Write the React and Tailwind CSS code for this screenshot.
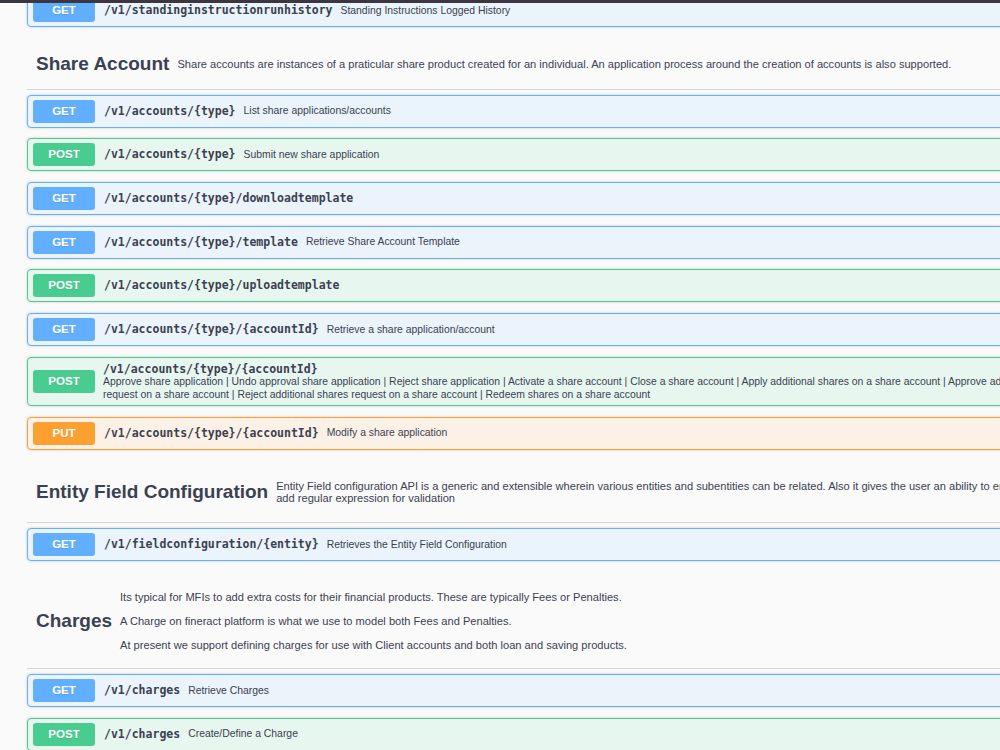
import React from "react";

const SANS = "font-['Liberation_Sans',Arial,sans-serif]";
const MONO = "font-['DejaVu_Sans_Mono',monospace]";

const STYLES = {
  GET: {
    box: "border-[#61affe] bg-[#ebf3fb]",
    badge: "bg-[#61affe]",
  },
  POST: {
    box: "border-[#49cc90] bg-[#e8f6f0]",
    badge: "bg-[#49cc90]",
  },
  PUT: {
    box: "border-[#fca130] bg-[#fbf1e7]",
    badge: "bg-[#fca130]",
  },
};

function Badge({ method }) {
  return (
    <div
      className={`${STYLES[method].badge} w-[62px] h-[23px] shrink-0 rounded-[3px] flex items-center justify-center text-white font-bold text-[11.5px] ${SANS} [text-shadow:0_1px_0_rgba(0,0,0,0.1)]`}
    >
      {method}
    </div>
  );
}

function Op({ method, path, desc, lines, className = "" }) {
  const s = STYLES[method];
  if (lines) {
    return (
      <div
        className={`${s.box} border rounded-[4px] shadow-[0_0_3px_rgba(0,0,0,0.19)] flex items-center px-[5px] py-[4px] mb-[10.67px] ${className}`}
      >
        <Badge method={method} />
        <div className="ml-[8px] flex flex-col">
          <span className={`${MONO} font-bold text-[11.5px] leading-[14.5px] text-[#3b4151] whitespace-nowrap`}>
            {path}
          </span>
          <div className={`${SANS} text-[10.4px] leading-[12.5px] text-[#3b4151] whitespace-nowrap`}>
            {lines.map((l, i) => (
              <div key={i}>{l}</div>
            ))}
          </div>
        </div>
      </div>
    );
  }
  return (
    <div
      className={`${s.box} border rounded-[4px] shadow-[0_0_3px_rgba(0,0,0,0.19)] flex items-center h-[33px] px-[5px] mb-[10.67px] ${className}`}
    >
      <Badge method={method} />
      <span className={`${MONO} ml-[9px] font-bold text-[11.5px] text-[#3b4151] whitespace-nowrap`}>
        {path}
      </span>
      {desc && (
        <span className={`${SANS} ml-[8px] text-[10.4px] text-[#3b4151] whitespace-nowrap`}>
          {desc}
        </span>
      )}
    </div>
  );
}

function TagHeader({ title, pad, children }) {
  return (
    <div className={`flex items-center border-b border-[rgba(59,65,81,0.2)] pl-[9px] pr-[16px] mb-[5px] ${pad}`}>
      <h4 className={`${SANS} font-bold text-[19px] leading-[24px] text-[#3b4151] whitespace-nowrap`}>
        {title}
      </h4>
      <div className={`${SANS} pl-[8px] text-[11.1px] leading-[12px] text-[#3b4151] flex flex-col gap-[12px] py-[11px] whitespace-nowrap`}>
        {children}
      </div>
    </div>
  );
}

export default function App() {
  return (
    <div className="relative w-[1000px] h-[750px] overflow-hidden bg-[#fafafa]">
      <div className="absolute top-0 left-0 right-0 h-[3px] bg-[#3a3743] z-10" />
      <div className="w-[1200px] px-[27px]">
        <Op
          className="-mt-[6px]"
          method="GET"
          path="/v1/standinginstructionrunhistory"
          desc="Standing Instructions Logged History"
        />

        <TagHeader title="Share Account" pad="pt-[9px] pb-[8px]">
          <p>
            Share accounts are instances of a praticular share product created for an individual. An application process around the creation of accounts is also supported.
          </p>
        </TagHeader>
        <Op method="GET" path="/v1/accounts/{type}" desc="List share applications/accounts" />
        <Op method="POST" path="/v1/accounts/{type}" desc="Submit new share application" />
        <Op method="GET" path="/v1/accounts/{type}/downloadtemplate" />
        <Op method="GET" path="/v1/accounts/{type}/template" desc="Retrieve Share Account Template" />
        <Op method="POST" path="/v1/accounts/{type}/uploadtemplate" />
        <Op
          method="GET"
          path="/v1/accounts/{type}/{accountId}"
          desc="Retrieve a share application/account"
        />
        <Op
          method="POST"
          path="/v1/accounts/{type}/{accountId}"
          lines={[
            "Approve share application | Undo approval share application | Reject share application | Activate a share account | Close a share account | Apply additional shares on a share account | Approve additional shares",
            "request on a share account | Reject additional shares request on a share account | Redeem shares on a share account",
          ]}
        />
        <Op method="PUT" path="/v1/accounts/{type}/{accountId}" desc="Modify a share application" />

        <TagHeader title="Entity Field Configuration" pad="pt-[9px] pb-[7px]">
          <p>
            Entity Field configuration API is a generic and extensible wherein various entities and subentities can be related. Also it gives the user an ability to enable/disable fields,
            <br />
            add regular expression for validation
          </p>
        </TagHeader>
        <Op
          method="GET"
          path="/v1/fieldconfiguration/{entity}"
          desc="Retrieves the Entity Field Configuration"
        />

        <TagHeader title="Charges" pad="pt-[8px] pb-[6px]">
          <p>Its typical for MFIs to add extra costs for their financial products. These are typically Fees or Penalties.</p>
          <p>A Charge on fineract platform is what we use to model both Fees and Penalties.</p>
          <p>At present we support defining charges for use with Client accounts and both loan and saving products.</p>
        </TagHeader>
        <Op method="GET" path="/v1/charges" desc="Retrieve Charges" />
        <Op method="POST" path="/v1/charges" desc="Create/Define a Charge" />
      </div>
    </div>
  );
}
